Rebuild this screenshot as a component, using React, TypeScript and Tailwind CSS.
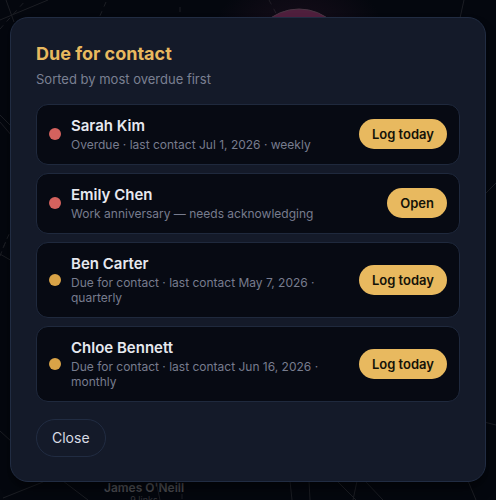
type Contact = {
  name: string;
  detail: string;
  action: string;
  overdue: boolean;
};

const contacts: Contact[] = [
  { name: "Sarah Kim", detail: "Overdue · last contact Jul 1, 2026 · weekly", action: "Log today", overdue: true },
  { name: "Emily Chen", detail: "Work anniversary — needs acknowledging", action: "Open", overdue: true },
  { name: "Ben Carter", detail: "Due for contact · last contact May 7, 2026 · quarterly", action: "Log today", overdue: false },
  { name: "Chloe Bennett", detail: "Due for contact · last contact Jun 16, 2026 · monthly", action: "Log today", overdue: false },
];

// Dimmed relationship graph behind the dialog
function GraphBackdrop() {
  return (
    <svg
      aria-hidden="true"
      viewBox="0 0 496 500"
      preserveAspectRatio="xMidYMid slice"
      className="absolute inset-0 h-full w-full"
    >
      <defs>
        <radialGradient id="glow">
          <stop offset="55%" stopColor="#4b1e3d" stopOpacity="0.16" />
          <stop offset="100%" stopColor="#4b1e3d" stopOpacity="0" />
        </radialGradient>
      </defs>
      <g stroke="#1c1e24" strokeWidth="1" fill="none">
        <path d="M6 0L14 22M0 20L48 0M464 0L460 18" />
        <path d="M0 115L12 127M0 122L12 136M0 254L12 261M0 431L12 442" />
        <path d="M484 195L496 183M484 422L496 425" />
        <path d="M3 498L43 482M63 481L88 500M156 481L160 500" />
        <path d="M290 481L292 500M309 481L310 500M337 481L356 500M357 481L353 500M365 481L383 500M468 481L476 500" />
        <path strokeDasharray="5 5" d="M0 29L26 0M106 2L99 18M180 7L180 18M269 0L277 15M3 248L10 232M0 256L6 241M182 494L182 500" />
      </g>
      <circle cx="299" cy="58" r="92" fill="url(#glow)" />
      <circle cx="299" cy="58" r="49" fill="#4f1f3d" stroke="#4a3543" strokeWidth="1" />
      <g textAnchor="middle" className="font-semibold">
        <text x="144" y="492" fontSize="12" fill="#4a4b50">James O'Neill</text>
        <text x="144" y="503" fontSize="9" fill="#34353a" className="font-normal">9 links</text>
      </g>
    </svg>
  );
}

function ContactRow({ contact }: { contact: Contact }) {
  return (
    <li className="flex items-center gap-2.5 rounded-xl border border-[#1f293d] bg-[#070a13] px-3 py-2.5">
      <span
        className={
          contact.overdue
            ? "size-3 shrink-0 rounded-full bg-[#d4625e]"
            : "size-3 shrink-0 rounded-full bg-[#d9a347]"
        }
      />
      <div className="min-w-0 flex-1 pb-px">
        <h2 className="text-[15px] leading-[22px] font-semibold text-[#e6e8ef]">{contact.name}</h2>
        <p className="pb-px text-[12px] leading-[15px] text-[#777c8e]">{contact.detail}</p>
      </div>
      <button
        type="button"
        className="ml-6 shrink-0 cursor-pointer rounded-full bg-[#e8b95f] px-[13px] py-1.5 text-[13px] leading-[18px] font-semibold text-[#141208]"
      >
        {contact.action}
      </button>
    </li>
  );
}

export default function App() {
  return (
    <div className="relative flex min-h-screen items-center justify-center overflow-hidden bg-[#04070e] px-2.5 pt-4 pb-[18px] font-['Inter','Liberation_Sans',sans-serif]">
      <GraphBackdrop />
      <div
        role="dialog"
        aria-labelledby="dialog-title"
        className="relative w-full max-w-lg rounded-[18px] border border-[#212c42] bg-[#141a29] px-[25px] py-6 shadow-lg shadow-black/40"
      >
        <h1 id="dialog-title" className="text-lg leading-6 font-bold text-[#e8b95f]">
          Due for contact
        </h1>
        <p className="mt-[3px] text-[13px] leading-5 text-[#7b8092]">Sorted by most overdue first</p>
        <ul className="mt-[15px] flex flex-col gap-2">
          {contacts.map((contact) => (
            <ContactRow key={contact.name} contact={contact} />
          ))}
        </ul>
        <button
          type="button"
          className="mt-[17px] cursor-pointer rounded-full border border-[#212c42] px-[15px] py-2 text-sm text-[#d9dce5]"
        >
          Close
        </button>
      </div>
    </div>
  );
}
